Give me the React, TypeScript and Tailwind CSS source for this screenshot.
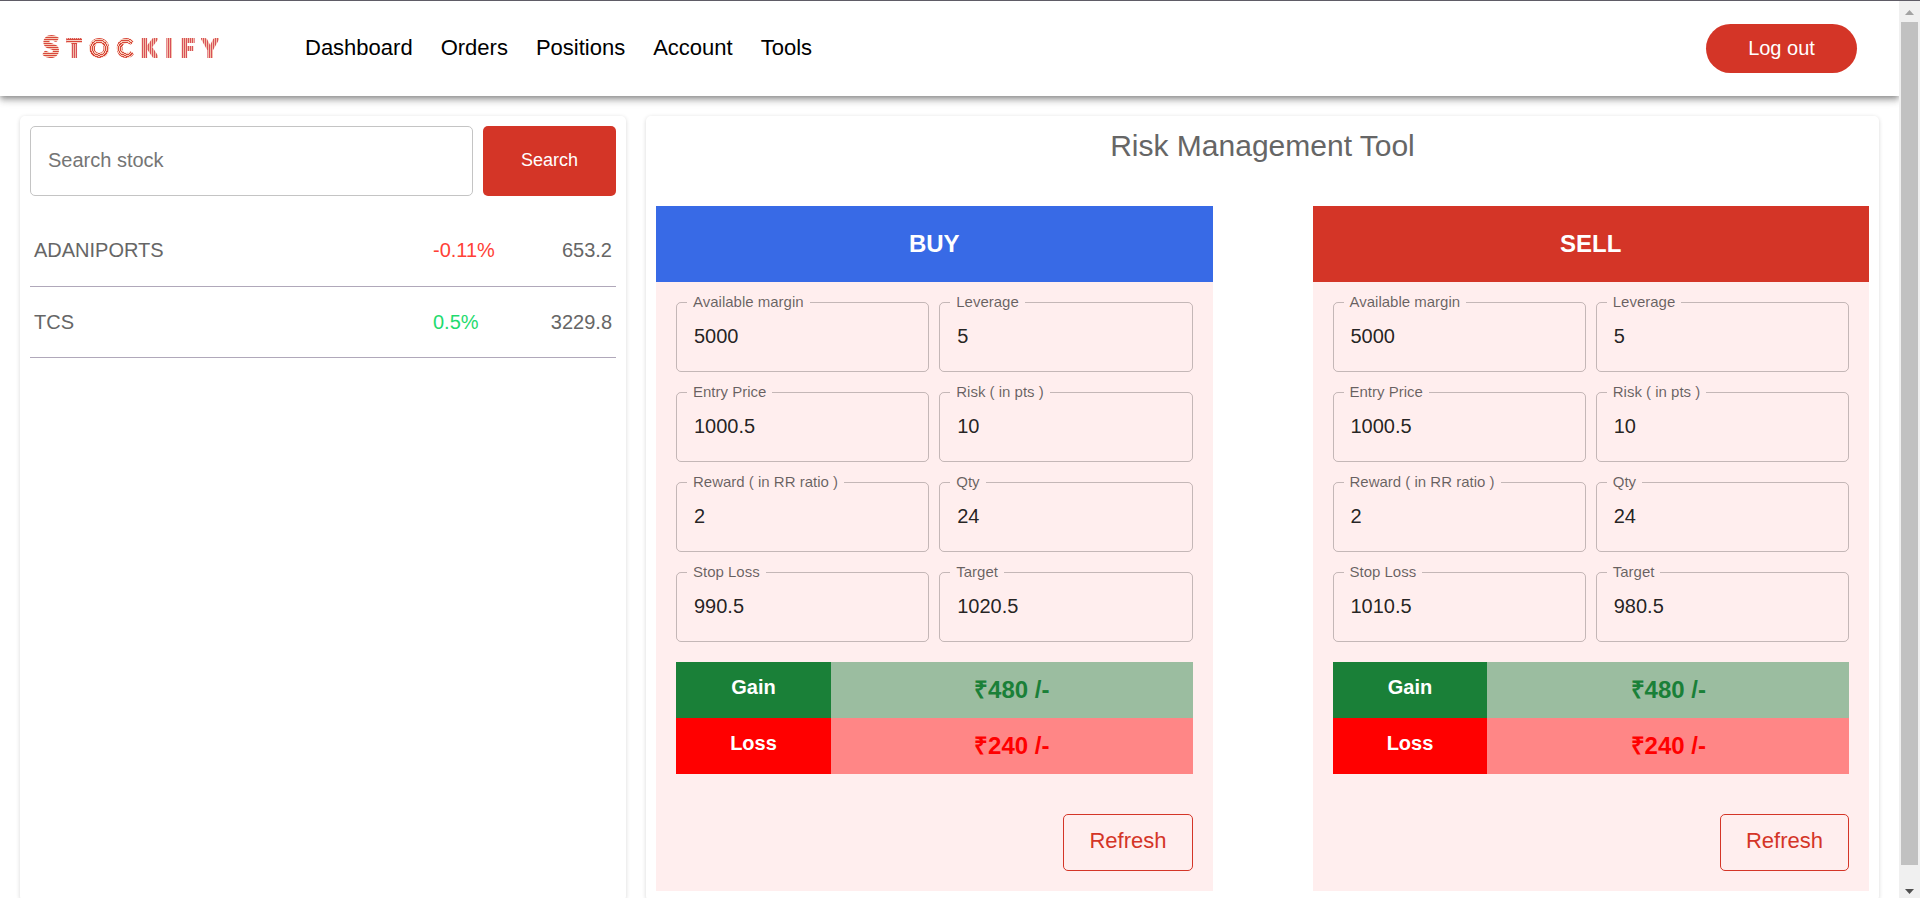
import React, { useId } from "react";

type FieldData = { label: string; value: string };

const navItems = ["Dashboard", "Orders", "Positions", "Account", "Tools"];

const stocks = [
  { symbol: "ADANIPORTS", change: "-0.11%", price: "653.2", up: false },
  { symbol: "TCS", change: "0.5%", price: "3229.8", up: true },
];

const sharedFields: FieldData[] = [
  { label: "Available margin", value: "5000" },
  { label: "Leverage", value: "5" },
  { label: "Entry Price", value: "1000.5" },
  { label: "Risk ( in pts )", value: "10" },
  { label: "Reward ( in RR ratio )", value: "2" },
  { label: "Qty", value: "24" },
];

const buyFields: FieldData[] = [
  ...sharedFields,
  { label: "Stop Loss", value: "990.5" },
  { label: "Target", value: "1020.5" },
];

const sellFields: FieldData[] = [
  ...sharedFields,
  { label: "Stop Loss", value: "1010.5" },
  { label: "Target", value: "980.5" },
];

/* Each letter is cut out of its own set of stripes: rings for round letters, bars for straight ones. */
const rings = "bg-[repeating-radial-gradient(circle_at_50%_52%,#d8483c_0px_1px,#f6cbb8_1px_2px)]";
const bars = "bg-[repeating-linear-gradient(90deg,#d8505a_0px_1px,#f3c0a8_1px_2px)]";
const rows = "bg-[repeating-linear-gradient(0deg,#d8483c_0px_1px,#f6cbb8_1px_2px)]";
const teeStripes =
  "bg-[linear-gradient(#d8483c_0_1px,#f8d3c8_1px_2px,#d8483c_2px_3px,#f8d3c8_3px_4px,#d8483c_4px_5px),repeating-linear-gradient(90deg,#d8505a_0px_1px,#f3c0a8_1px_2px)] bg-[length:100%_5px,100%_100%] bg-[position:0_7px,0_0] bg-no-repeat";

const logoLetters = [
  { char: "S", stripes: rows, size: "text-[29px]" },
  { char: "T", stripes: teeStripes, size: "text-2xl" },
  { char: "O", stripes: rings, size: "text-2xl" },
  { char: "C", stripes: rings, size: "text-2xl" },
  { char: "K", stripes: bars, size: "text-2xl" },
  { char: "I", stripes: bars, size: "text-2xl" },
  { char: "F", stripes: bars, size: "text-2xl" },
  { char: "Y", stripes: bars, size: "text-2xl" },
];

function Logo() {
  return (
    <span className="flex w-[200px] items-baseline gap-1.5 pb-1 font-['Lato',sans-serif] font-black">
      {logoLetters.map((l) => (
        <span
          key={l.char}
          className={`bg-clip-text px-px leading-8! text-transparent [-webkit-text-stroke:2px_transparent] ${l.size} ${l.stripes}`}
        >
          {l.char}
        </span>
      ))}
    </span>
  );
}

function Header() {
  return (
    <header className="relative z-10 flex h-24 shrink-0 items-center border-t border-[#5f5c66] bg-white px-[42px] shadow-[0_2px_5px_-1px_rgba(0,0,0,0.3),0_5px_6px_0_rgba(0,0,0,0.18),0_1px_12px_0_rgba(0,0,0,0.14)]">
      <a href="#home" className="mr-[63px]" aria-label="Stockify">
        <Logo />
      </a>
      <nav className="flex flex-1 gap-7 pb-0.5 text-[22px] leading-7 text-black">
        {navItems.map((item) => (
          <a key={item} href={"#" + item.toLowerCase()}>
            {item}
          </a>
        ))}
      </nav>
      <button type="button" className="h-[49px] w-[151px] rounded-full bg-[#d43527] pb-0.5 text-xl text-white">
        Log out
      </button>
    </header>
  );
}

function Watchlist() {
  return (
    <section className="w-[606px] shrink-0 rounded-[5px] bg-white p-2.5 shadow-[0_1px_4px_rgba(0,0,0,0.16)]">
      <form className="flex gap-2.5" onSubmit={(e) => e.preventDefault()}>
        <input
          type="text"
          aria-label="Search stock"
          placeholder="Search stock"
          className="h-[70px] min-w-0 flex-1 rounded-[5px] border border-[#c4c4c4] px-[17px] pb-0.5 text-xl placeholder:text-[#757575]"
        />
        <button type="submit" className="h-[70px] w-[133px] rounded-[5px] bg-[#d43527] pb-0.5 text-lg text-white">
          Search
        </button>
      </form>
      <table className="mt-[19px] w-full table-fixed text-xl text-[#666]">
        <tbody>
          {stocks.map((s) => (
            <tr key={s.symbol} className="h-[71px] border-b border-[#b0a8ba]">
              <td className="pl-1">{s.symbol}</td>
              <td className={s.up ? "w-[93px] text-[#1fdb6f]" : "w-[93px] text-[#ff4136]"}>{s.change}</td>
              <td className="w-[90px] pr-1 text-right">{s.price}</td>
            </tr>
          ))}
        </tbody>
      </table>
    </section>
  );
}

function Field({ label, value }: FieldData) {
  const id = useId();
  return (
    <fieldset className="h-20 min-w-0 rounded-[5px] border border-black/23">
      <legend className="ml-2.5 px-1.5 text-[15px] leading-5 text-black/60">
        <label htmlFor={id}>{label}</label>
      </legend>
      <input
        id={id}
        type="text"
        defaultValue={value}
        className="block h-12 w-full bg-transparent px-[17px] text-xl text-black/87"
      />
    </fieldset>
  );
}

function OrderPanel({ title, headClass, fields }: { title: string; headClass: string; fields: FieldData[] }) {
  return (
    <article className="min-w-0 flex-1 bg-[#ffeeee]">
      <h3 className={headClass}>{title}</h3>
      <div className="px-5 pt-2.5 pb-5">
        <div className="grid grid-cols-2 gap-2.5">
          {fields.map((f) => (
            <Field key={f.label} label={f.label} value={f.value} />
          ))}
        </div>
        <table className="mt-5 w-full table-fixed text-center font-bold">
          <tbody>
            <tr className="h-14">
              <th scope="row" className="w-[30%] bg-[#1a8038] pb-1.5 text-xl text-white">
                Gain
              </th>
              <td className="bg-[#9bbda0] text-2xl text-[#1a8038]">₹480 /-</td>
            </tr>
            <tr className="h-14">
              <th scope="row" className="bg-[#ff0000] pb-1.5 text-xl text-white">
                Loss
              </th>
              <td className="bg-[#ff8686] text-2xl text-[#ff0000]">₹240 /-</td>
            </tr>
          </tbody>
        </table>
        <div className="mt-10 flex justify-end">
          <button
            type="button"
            className="h-[57px] rounded-[5px] border border-[#d43527] px-[25px] pb-1 text-[22px] text-[#d43527]"
          >
            Refresh
          </button>
        </div>
      </div>
    </article>
  );
}

function RiskTool() {
  return (
    <section className="min-w-0 flex-1 rounded-[5px] bg-white p-2.5 shadow-[0_1px_4px_rgba(0,0,0,0.16)]">
      <h2 className="mb-10 text-center text-3xl leading-10 text-[#666]">Risk Management Tool</h2>
      <div className="flex gap-[100px]">
        <OrderPanel
          title="BUY"
          headClass="bg-[#386ae6] text-center text-2xl leading-[76px] font-bold text-white"
          fields={buyFields}
        />
        <OrderPanel
          title="SELL"
          headClass="bg-[#d43527] text-center text-2xl leading-[76px] font-bold text-white"
          fields={sellFields}
        />
      </div>
    </section>
  );
}

function Scrollbar() {
  return (
    <div aria-hidden="true" className="flex w-[21px] shrink-0 flex-col items-center border-t border-[#5f5c66] bg-[#f0f0f0]">
      <svg width="21" height="21" viewBox="0 0 21 21">
        <path d="M6 14 L10.5 9 L15 14 Z" fill="#a3a3a3" />
      </svg>
      <div className="w-[17px] flex-1 bg-[#c1c1c1]" />
      <svg width="21" height="33" viewBox="0 0 21 33">
        <path d="M6 24 L15 24 L10.5 29 Z" fill="#505050" />
      </svg>
    </div>
  );
}

export default function App() {
  return (
    <div className="flex h-screen overflow-hidden bg-white font-['Liberation_Sans',Arial,sans-serif]">
      <div className="flex min-w-0 flex-1 flex-col overflow-hidden">
        <Header />
        <main className="flex gap-5 p-5">
          <Watchlist />
          <RiskTool />
        </main>
      </div>
      <Scrollbar />
    </div>
  );
}
